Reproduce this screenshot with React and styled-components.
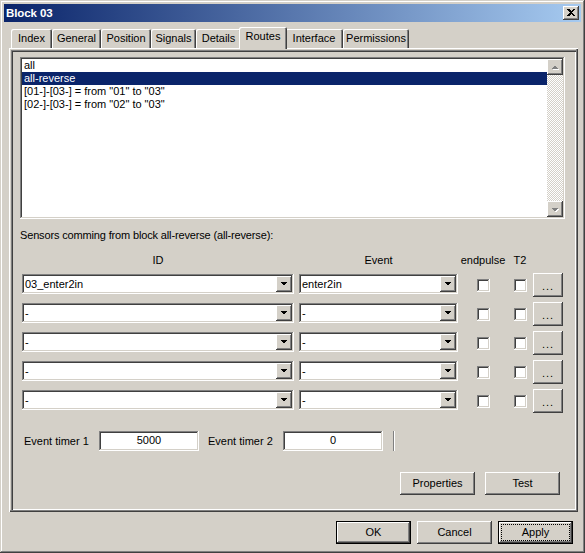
import React from 'react';
import styled, { createGlobalStyle } from 'styled-components';

const GlobalStyle = createGlobalStyle`
  html, body {
    margin: 0;
    padding: 0;
    background: #d4d0c8;
  }
  body {
    font-family: "Liberation Sans", Arial, sans-serif;
    font-size: 11px;
    color: #000000;
  }
  * {
    box-sizing: border-box;
  }
`;

const raised = `
  box-shadow: inset -1px -1px #404040, inset 1px 1px #ffffff,
    inset -2px -2px #808080, inset 2px 2px #d4d0c8;
`;

const sunken = `
  box-shadow: inset -1px -1px #ffffff, inset 1px 1px #808080,
    inset -2px -2px #d4d0c8, inset 2px 2px #404040;
`;

const tabs = [
  { label: 'Index', w: 41 },
  { label: 'General', w: 49 },
  { label: 'Position', w: 50 },
  { label: 'Signals', w: 45 },
  { label: 'Details', w: 45 },
  { label: 'Routes', w: 44, active: true },
  { label: 'Interface', w: 58 },
  { label: 'Permissions', w: 66 },
];

const routes = [
  'all',
  'all-reverse',
  '[01-]-[03-] = from "01" to "03"',
  '[02-]-[03-] = from "02" to "03"',
];

const sensors = [
  { id: '03_enter2in', ev: 'enter2in' },
  { id: '-', ev: '-' },
  { id: '-', ev: '-' },
  { id: '-', ev: '-' },
  { id: '-', ev: '-' },
];

const ArrowDown = ({ color = '#000' }) => (
  <svg width="16" height="16" viewBox="0 0 16 16" shapeRendering="crispEdges">
    <polygon points="4,6 11,6 7.5,9.5" fill={color} />
  </svg>
);

const DisabledArrow = ({ up }) => (
  <svg width="16" height="16" viewBox="0 0 16 16" shapeRendering="crispEdges">
    {up ? (
      <>
        <polygon points="5,11 12,11 8.5,7.5" fill="#ffffff" />
        <polygon points="4,10 11,10 7.5,6.5" fill="#808080" />
      </>
    ) : (
      <>
        <polygon points="5,8 12,8 8.5,11.5" fill="#ffffff" />
        <polygon points="4,7 11,7 7.5,10.5" fill="#808080" />
      </>
    )}
  </svg>
);

const App = () => {
  return (
    <>
      <GlobalStyle />
      <Window>
        <TitleBar>
          <TitleText>Block 03</TitleText>
          <CloseButton>
            <svg width="8" height="7" viewBox="0 0 8 7" shapeRendering="crispEdges">
              <path d="M0 0h2l2 2 2-2h2L5 3.5 8 7H6L4 5 2 7H0l3-3.5z" fill="#000" />
            </svg>
          </CloseButton>
        </TitleBar>

        <TabStrip>
          {tabs.map((t) => (
            <Tab key={t.label} $w={t.w} $active={t.active}>
              {t.label}
            </Tab>
          ))}
        </TabStrip>

        <TabPanel>
          <InnerFrame>
            <ListBox>
              <ListItems>
                {routes.map((r, i) => (
                  <ListItem key={r} $selected={i === 1}>
                    {r}
                  </ListItem>
                ))}
              </ListItems>
              <ScrollBar>
                <ScrollButton>
                  <DisabledArrow up />
                </ScrollButton>
                <ScrollTrack />
                <ScrollButton>
                  <DisabledArrow />
                </ScrollButton>
              </ScrollBar>
            </ListBox>

            <SectionLabel>Sensors comming from block all-reverse (all-reverse):</SectionLabel>

            <SensorGrid $header>
              <HeaderCell>ID</HeaderCell>
              <HeaderCell $pad>Event</HeaderCell>
              <HeaderCell>endpulse</HeaderCell>
              <HeaderCell>T2</HeaderCell>
              <span />
            </SensorGrid>

            <SensorRows>
              {sensors.map((s, i) => (
                <SensorGrid key={i}>
                  <Combo $w={272}>
                    <ComboText>{s.id}</ComboText>
                    <ComboButton>
                      <ArrowDown />
                    </ComboButton>
                  </Combo>
                  <Combo $w={159} $end>
                    <ComboText>{s.ev}</ComboText>
                    <ComboButton>
                      <ArrowDown />
                    </ComboButton>
                  </Combo>
                  <CheckBox />
                  <CheckBox />
                  <EllipsisButton>...</EllipsisButton>
                </SensorGrid>
              ))}
            </SensorRows>

            <TimerRow>
              <TimerLabel>Event timer 1</TimerLabel>
              <TextField>5000</TextField>
              <span />
              <TimerLabel>Event timer 2</TimerLabel>
              <TextField>0</TextField>
              <span />
              <Separator />
            </TimerRow>

            <PanelButtons>
              <Button>Properties</Button>
              <Button>Test</Button>
            </PanelButtons>
          </InnerFrame>
        </TabPanel>

        <Footer>
          <Button $default>OK</Button>
          <Button>Cancel</Button>
          <Button $default $focus>
            <FocusRing>Apply</FocusRing>
          </Button>
        </Footer>
      </Window>
    </>
  );
};

export default App;

const Window = styled.div`
  width: 585px;
  height: 553px;
  padding: 4px;
  background: #d4d0c8;
  box-shadow: inset -1px -1px #404040, inset 1px 1px #d4d0c8,
    inset -2px -2px #808080, inset 2px 2px #ffffff;
  display: flex;
  flex-direction: column;
`;

const TitleBar = styled.div`
  height: 18px;
  background: linear-gradient(to right, #0a246a, #a6caf0);
  display: flex;
  align-items: center;
  justify-content: space-between;
  padding: 0 2px 0 2px;
`;

const TitleText = styled.span`
  color: #ffffff;
  font-weight: bold;
  font-size: 11.5px;
  letter-spacing: -0.1px;
`;

const CloseButton = styled.div`
  width: 16px;
  height: 14px;
  background: #d4d0c8;
  ${raised}
  display: flex;
  align-items: center;
  justify-content: center;
  padding-bottom: 1px;
`;

const TabStrip = styled.div`
  margin-top: 5px;
  margin-left: 5px;
  padding-left: 2px;
  height: 21px;
  display: flex;
  align-items: flex-end;
  position: relative;
  z-index: 1;
`;

const Tab = styled.div`
  width: ${(p) => (p.$active ? p.$w + 4 : p.$w)}px;
  height: ${(p) => (p.$active ? 22 : 19)}px;
  margin: ${(p) => (p.$active ? '0 -2px -1px -2px' : '0')};
  background: #d4d0c8;
  border-radius: 2px 2px 0 0;
  box-shadow: inset 1px 1px #ffffff, inset -1px 0 #404040, inset -2px 0 #808080;
  display: flex;
  justify-content: center;
  padding-top: 3px;
  line-height: 13px;
  position: relative;
  z-index: ${(p) => (p.$active ? 2 : 0)};
`;

const TabPanel = styled.div`
  margin-left: 5px;
  width: 569px;
  height: 464px;
  padding: 2px;
  background: #d4d0c8;
  box-shadow: inset 1px 1px #ffffff, inset -1px -1px #404040, inset -2px -2px #808080;
  display: flex;
`;

const InnerFrame = styled.div`
  flex: 1;
  box-shadow: inset 1px 1px #808080, inset 2px 2px #404040, inset -1px -1px #ffffff;
  padding: 7px 0 0 9px;
  display: flex;
  flex-direction: column;
`;

const ListBox = styled.div`
  width: 545px;
  height: 162px;
  padding: 2px;
  background: #ffffff;
  ${sunken}
  display: flex;
`;

const ListItems = styled.div`
  flex: 1;
`;

const ListItem = styled.div`
  height: 13px;
  line-height: 13px;
  padding-left: 2px;
  white-space: pre;
  background: ${(p) => (p.$selected ? '#0a246a' : 'transparent')};
  color: ${(p) => (p.$selected ? '#ffffff' : '#000000')};
`;

const ScrollBar = styled.div`
  width: 16px;
  display: flex;
  flex-direction: column;
`;

const ScrollButton = styled.div`
  width: 16px;
  height: 16px;
  background: #d4d0c8;
  ${raised}
`;

const ScrollTrack = styled.div`
  flex: 1;
  background: repeating-conic-gradient(#d4d0c8 0% 25%, #ffffff 0% 50%) 0 0 / 2px 2px;
`;

const SectionLabel = styled.div`
  margin-top: 10px;
  line-height: 13px;
  letter-spacing: -0.15px;
`;

const SensorRows = styled.div`
  margin-top: 6px;
  display: flex;
  flex-direction: column;
`;

const SensorGrid = styled.div`
  margin-left: 2px;
  margin-top: ${(p) => (p.$header ? 12 : 0)}px;
  display: grid;
  grid-template-columns: 272px 164px 50px 24px 31px;
  align-items: start;
  height: ${(p) => (p.$header ? 13 : 29)}px;
`;

const HeaderCell = styled.div`
  text-align: center;
  line-height: 13px;
  padding-left: ${(p) => (p.$pad ? 5 : 0)}px;
`;

const Combo = styled.div`
  width: ${(p) => p.$w}px;
  justify-self: ${(p) => (p.$end ? 'end' : 'start')};
  margin-top: 1px;
  height: 20px;
  background: #ffffff;
  ${sunken}
  display: flex;
  align-items: center;
  padding: 2px 2px 2px 3px;
`;

const ComboText = styled.span`
  flex: 1;
  line-height: 13px;
`;

const ComboButton = styled.div`
  width: 16px;
  height: 16px;
  background: #d4d0c8;
  ${raised}
`;

const CheckBox = styled.div`
  justify-self: center;
  margin-top: 6px;
  width: 13px;
  height: 13px;
  background: #ffffff;
  ${sunken}
`;

const EllipsisButton = styled.div`
  justify-self: end;
  width: 30px;
  height: 24px;
  background: #d4d0c8;
  ${raised}
  display: flex;
  align-items: center;
  justify-content: center;
  padding-top: 2px;
  letter-spacing: 1px;
`;

const TimerRow = styled.div`
  margin-top: 13px;
  margin-left: 4px;
  display: grid;
  grid-template-columns: 75px 100px 9px 75px 100px 10px 2px;
  align-items: center;
  height: 20px;
`;

const TimerLabel = styled.span`
  line-height: 13px;
`;

const TextField = styled.div`
  height: 20px;
  background: #ffffff;
  ${sunken}
  text-align: center;
  line-height: 19px;
`;

const Separator = styled.div`
  height: 20px;
  border-left: 1px solid #808080;
  border-right: 1px solid #ffffff;
`;

const PanelButtons = styled.div`
  margin-top: 21px;
  width: 540px;
  display: flex;
  justify-content: flex-end;
  gap: 10px;
`;

const Footer = styled.div`
  margin-top: 9px;
  margin-right: 8px;
  display: flex;
  justify-content: flex-end;
  gap: 6px;
`;

const Button = styled.div`
  width: 75px;
  height: 23px;
  background: #d4d0c8;
  ${(p) =>
    p.$default
      ? `box-shadow: inset 0 0 0 1px #000000, inset -2px -2px #404040, inset 2px 2px #ffffff,
    inset -3px -3px #808080;`
      : raised}
  display: flex;
  align-items: center;
  justify-content: center;
  line-height: 13px;
  padding: ${(p) => (p.$focus ? '4px' : '0')};
`;

const FocusRing = styled.span`
  flex: 1;
  align-self: stretch;
  outline: 1px dotted #000000;
  display: flex;
  align-items: center;
  justify-content: center;
`;
